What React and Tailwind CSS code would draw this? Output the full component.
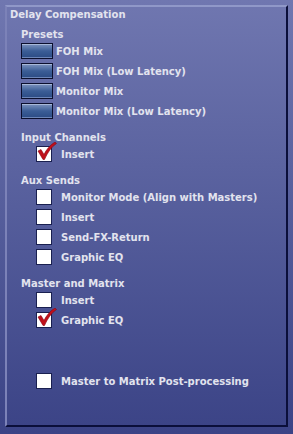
import React from 'react';

const font = { fontFamily: '"DejaVu Sans", sans-serif' };

const Check = () => (
    <svg width="20" height="20" viewBox="0 0 20 20" className="absolute -top-[5px] left-0">
        <path d="M1 9 L4 7.5 L7 12.5 C9 8 13 3 18 0 L19.5 1.5 C14 5 10.5 11 7.5 17.5 L6 17.5 Z" fill="#c0101a" stroke="#8a0010" strokeWidth="0.6" />
    </svg>
);

const Box = ({ checked }) => (
    <div className="relative w-[16px] h-[16px] bg-white border border-[#1a2050] shrink-0">
        {checked && <Check />}
    </div>
);

const PresetButton = ({ label }) => (
    <div className="flex items-center gap-[3px] h-[20px]">
        <div className="w-[32px] h-[16px] border border-[#0b0f2e] bg-gradient-to-b from-[#7d93bf] via-[#3b5d96] to-[#2b4b84] shadow-[inset_0_1px_0_#a8b8d8,inset_0_-1px_0_#6d86b8] shrink-0" />
        <span>{label}</span>
    </div>
);

const CheckRow = ({ label, checked }) => (
    <div className="flex items-center gap-[9px] h-[20px] pl-[15px]">
        <Box checked={checked} />
        <span>{label}</span>
    </div>
);

const Heading = ({ children }) => <div className="h-[14px] flex items-center">{children}</div>;

export default function App() {
    return (
        <div
            className="w-[293px] h-[434px] bg-gradient-to-b from-[#7077b0] to-[#3b4386] p-[5px] text-[10px] font-bold text-[#e2e3ee]"
            style={font}
        >
            <div className="h-[422px] border-[2px] border-t-[#9098c8] border-l-[#7c82b8] border-r-[#0b0f3a] border-b-[#0b0f3a] pl-[3px]">
                <div className="h-[14px] flex items-center">Delay Compensation</div>
                <div className="pl-[11px] pt-[6px]">
                    <Heading>Presets</Heading>
                    <PresetButton label="FOH Mix" />
                    <PresetButton label="FOH Mix (Low Latency)" />
                    <PresetButton label="Monitor Mix" />
                    <PresetButton label="Monitor Mix (Low Latency)" />

                    <div className="mt-[9px]">
                        <Heading>Input Channels</Heading>
                        <CheckRow label="Insert" checked />
                    </div>

                    <div className="mt-[9px]">
                        <Heading>Aux Sends</Heading>
                        <CheckRow label="Monitor Mode (Align with Masters)" />
                        <CheckRow label="Insert" />
                        <CheckRow label="Send-FX-Return" />
                        <CheckRow label="Graphic EQ" />
                    </div>

                    <div className="mt-[9px]">
                        <Heading>Master and Matrix</Heading>
                        <CheckRow label="Insert" />
                        <CheckRow label="Graphic EQ" checked />
                    </div>

                    <div className="mt-[41px]">
                        <CheckRow label="Master to Matrix Post-processing" />
                    </div>
                </div>
            </div>
        </div>
    );
}
